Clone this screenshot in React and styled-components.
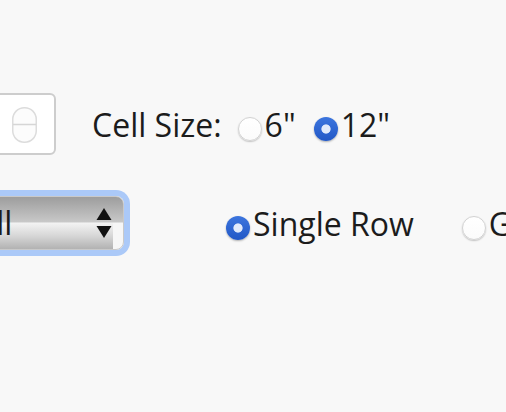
import React from 'react';
import styled, { createGlobalStyle } from 'styled-components';

const GlobalStyle = createGlobalStyle`
  html, body {
    margin: 0;
    padding: 0;
    overflow: hidden;
    background: #f8f8f8;
  }
  body {
    font-family: "Open Sans", "Noto Sans", sans-serif;
    color: #1c1c1c;
  }
`;

const Page = styled.div`
  width: 506px;
  height: 412px;
  padding-top: 93px;
  box-sizing: border-box;
  display: flex;
  flex-direction: column;
  gap: 41px;
  overflow: hidden;
`;

const Row = styled.div`
  display: flex;
  align-items: center;
  white-space: nowrap;
  font-size: 32px;
`;

const NumberBox = styled.div`
  margin-left: -100px;
  width: 156px;
  height: 62px;
  box-sizing: border-box;
  border: 2px solid #cdcdcd;
  border-radius: 6px;
  background: #ffffff;
  display: flex;
  align-items: center;
  justify-content: flex-end;
  padding: 2px 17px 0 0;
  flex-shrink: 0;
`;

const Label = styled.span`
  margin-left: ${p => p.$gap || 0}px;
`;

const Option = styled.label`
  display: inline-flex;
  align-items: center;
  gap: 3px;
  margin-left: ${p => p.$gap || 0}px;
`;

const Radio = styled.input.attrs({ type: 'radio' })`
  appearance: none;
  -webkit-appearance: none;
  margin: 10px 0 0 0;
  width: 24px;
  height: 24px;
  border-radius: 50%;
  box-sizing: border-box;
  flex-shrink: 0;
  border: 1px solid #d2d2d2;
  background: linear-gradient(#ffffff, #fbfbfb);
  box-shadow: 0 1px 1.5px rgba(0, 0, 0, 0.22);

  &:checked {
    border: none;
    background:
      radial-gradient(circle, #e1eafb 0 4.2px, transparent 5px),
      linear-gradient(#3c75de, #2258c6);
    box-shadow: 0 1px 2px rgba(0, 0, 0, 0.3);
  }
`;

const SelectBox = styled.div`
  margin-left: -45px;
  width: 169px;
  height: 54px;
  box-sizing: border-box;
  flex-shrink: 0;
  border: 1px solid #c9c9c9;
  border-radius: 8px;
  box-shadow: 0 0 0 6px #abc9f8;
  background:
    linear-gradient(to bottom, transparent 50%, #f6f6f6 50%) right top / 10px 100% no-repeat,
    linear-gradient(to bottom, #9d9d9d 0%, #c8c8c8 48%, #f3f3f3 50%, #d6d6d6 75%, #b2b2b2 100%);
  display: flex;
  align-items: center;
  padding: 0 11px 0 20px;
  color: #1a1a1a;
`;

const SelectText = styled.span`
  flex: 1;
  margin-top: -2px;
`;

const SpinnerIcon = () => (
  <svg width="25" height="36" viewBox="0 0 25 36">
    <rect x="0.75" y="0.75" width="23.5" height="34.5" rx="11.5" fill="#fcfcfc" stroke="#dcdcdc" strokeWidth="1.5" />
    <line x1="1" y1="17.5" x2="24" y2="17.5" stroke="#d6d6d6" strokeWidth="1.5" />
  </svg>
);

const ArrowsIcon = () => (
  <svg width="16" height="31" viewBox="0 0 16 31">
    <polygon points="8,0 15.5,12 0.5,12" fill="#111111" />
    <polygon points="0.5,18 15.5,18 8,30" fill="#111111" />
  </svg>
);

const App = () => {
  return (
    <>
      <GlobalStyle />
      <Page>
        <Row>
          <NumberBox>
            <SpinnerIcon />
          </NumberBox>
          <Label $gap={36}>Cell Size:</Label>
          <Option $gap={16}>
            <Radio name="cell" />
            6"
          </Option>
          <Option $gap={18}>
            <Radio name="cell" defaultChecked />
            12"
          </Option>
        </Row>
        <Row>
          <SelectBox>
            <SelectText>All</SelectText>
            <ArrowsIcon />
          </SelectBox>
          <Option $gap={102}>
            <Radio name="layout" defaultChecked />
            Single Row
          </Option>
          <Option $gap={48}>
            <Radio name="layout" />
            Grid
          </Option>
        </Row>
      </Page>
    </>
  );
};

export default App;
